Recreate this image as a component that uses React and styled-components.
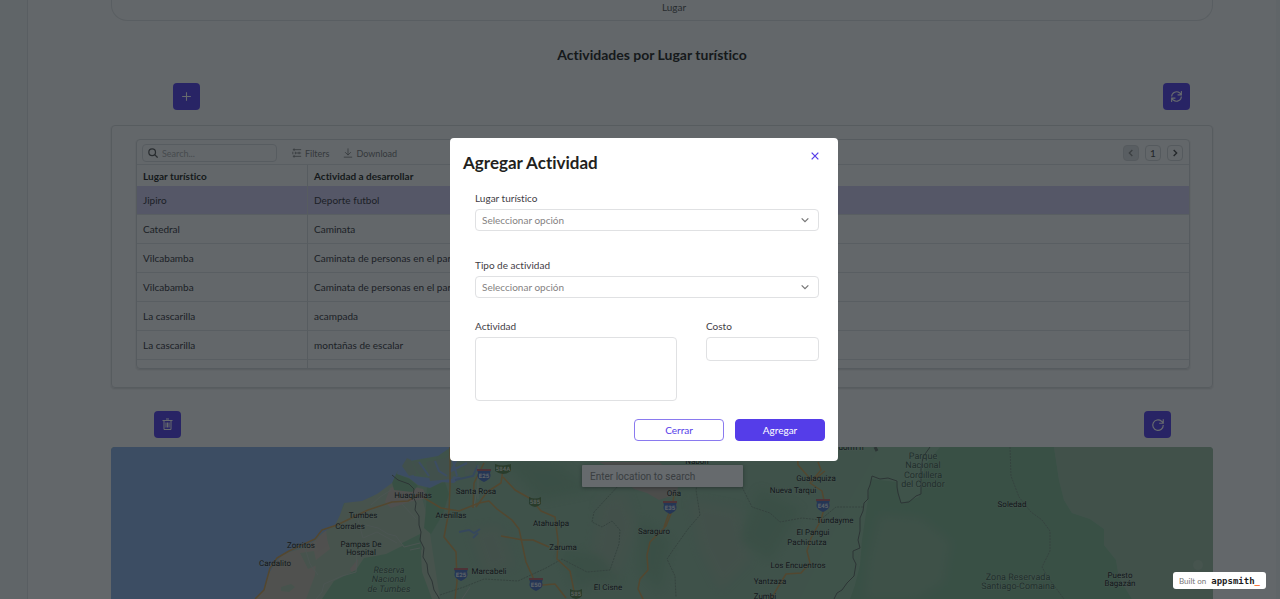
import React from "react";
import styled, { createGlobalStyle } from "styled-components";

const purple = "#553de9";

const GlobalStyle = createGlobalStyle`
  *, *::before, *::after { box-sizing: border-box; }
  body {
    margin: 0;
    background: #edf0f2;
    font-family: Lato, "Open Sans", sans-serif;
    font-size: 10px;
    font-variant-ligatures: none;
    color: #231f20;
  }
  button, input, select, textarea { font: inherit; color: inherit; }
`;

const Page = styled.div`
  height: 100vh;
  overflow: hidden;
  display: flex;
  padding: 0 4px 0 27px;
`;

const Canvas = styled.main`
  flex: 1;
  min-width: 0;
  display: flex;
  flex-direction: column;
  background: #f6f6f6;
  border-left: 1px solid #dadde0;
`;

const Column = styled.section`
  margin: 0 63px 0 83px;
  display: flex;
  flex-direction: column;
  flex: ${(p) => (p.$grow ? "1" : "none")};
  min-height: 0;
`;

const ChartCard = styled.div`
  height: 21px;
  padding-left: 24px;
  border: 1px solid #dcdedf;
  border-top: 0;
  border-radius: 0 0 16px 16px;
  text-align: center;
  line-height: 14px;
  color: #555;
`;

const SectionTitle = styled.h2`
  margin: 24px 0 0;
  font-size: 14px;
  line-height: 20px;
  font-weight: 700;
  text-align: center;
`;

const ActionBar = styled.div`
  display: flex;
  justify-content: space-between;
  padding: ${(p) => p.$padding};
`;

const IconButton = styled.button`
  width: 27px;
  height: 27px;
  padding: 0;
  border: 0;
  border-radius: 4px;
  background: ${purple};
  color: #fff;
  display: grid;
  place-items: center;
`;

const TableCard = styled.div`
  border: 1px solid #d5d7d9;
  border-radius: 4px;
  padding: 13px 22px 18px 24px;
  box-shadow: 0 1px 2px rgba(0, 0, 0, 0.14);
`;

const TableFrame = styled.div`
  border: 1px solid #d3d5d7;
  border-radius: 4px;
  height: 230px;
  overflow: hidden;
  box-shadow: 0 1px 2px rgba(0, 0, 0, 0.14);
`;

const Toolbar = styled.div`
  height: 25px;
  display: flex;
  align-items: center;
  padding: 2px 6px 0 5px;
  border-bottom: 1px solid #dcdedf;
`;

const SearchBox = styled.label`
  width: 135px;
  height: 18px;
  display: flex;
  align-items: center;
  gap: 4px;
  padding: 0 5px;
  margin-right: 15px;
  border: 1px solid #d6d8da;
  border-radius: 4px;
  color: #555;
`;

const SearchInput = styled.input`
  flex: 1;
  min-width: 0;
  border: 0;
  padding: 0;
  outline: 0;
  background: none;
  font-size: 9px;
  &::placeholder { color: #a9a9a9; opacity: 1; }
`;

const ToolButton = styled.button`
  display: flex;
  align-items: center;
  gap: 3px;
  padding: 0;
  margin-right: 14px;
  border: 0;
  background: none;
  color: #777;
  font-size: 9px;
`;

const Pager = styled.nav`
  display: flex;
  gap: 6px;
  margin-left: auto;
`;

const PageButton = styled.button`
  width: 16px;
  height: 16px;
  padding: 0;
  display: grid;
  place-items: center;
  border: 1px solid #d0d2d4;
  border-radius: 4px;
  background: ${(p) => (p.$muted ? "#dcdedf" : "transparent")};
  color: ${(p) => (p.$muted ? "#888" : "#444")};
`;

const Table = styled.table`
  width: 100%;
  border-collapse: separate;
  border-spacing: 0;
  table-layout: fixed;
`;

const HeadCell = styled.th`
  width: ${(p) => p.$width || "auto"};
  height: 21px;
  padding: 0 6px;
  text-align: left;
  font-weight: 700;
  border-right: ${(p) => (p.$width ? "1px solid #d6d8da" : "0")};
`;

const Row = styled.tr`
  background: ${(p) => (p.$selected ? "#cfc9ef" : "transparent")};
`;

const Cell = styled.td`
  height: 29px;
  padding: 0 6px;
  color: #35343a;
  border-bottom: 1px solid #dcdedf;
  &:first-child { border-right: 1px solid #d6d8da; }
`;

const MapFrame = styled.div`
  position: relative;
  flex: 1;
  min-height: 0;
  overflow: hidden;
  border-radius: 4px 4px 0 0;
`;

const MapDrawing = styled.svg`
  display: block;
  width: 100%;
  height: 100%;
  font-family: Roboto, sans-serif;
  text-rendering: geometricPrecision;
`;

const MapSearch = styled.input`
  position: absolute;
  top: 18px;
  left: 50%;
  width: 161px;
  height: 22px;
  margin-left: -80px;
  padding: 0 8px;
  border: 0;
  border-radius: 1px;
  background: #fff;
  font-family: Roboto, sans-serif;
  box-shadow: 0 1px 4px rgba(0, 0, 0, 0.4);
  &::placeholder { color: #858585; opacity: 1; }
`;

const Overlay = styled.div`
  position: fixed;
  inset: 0;
  display: grid;
  place-items: center;
  padding-left: 8px;
  background: rgba(16, 22, 26, 0.64);
`;

const Modal = styled.form`
  width: 388px;
  padding-bottom: 20px;
  border-radius: 4px;
  background: #fff;
`;

const ModalHeader = styled.header`
  display: flex;
  justify-content: space-between;
  align-items: flex-start;
  padding: 12px 17px 0 13px;
`;

const ModalTitle = styled.h1`
  margin: 0;
  font-size: 17px;
  line-height: 25px;
  font-weight: 700;
`;

const CloseButton = styled.button`
  width: 12px;
  height: 12px;
  padding: 0;
  border: 0;
  background: none;
  color: ${purple};
  display: grid;
  place-items: center;
`;

const Fields = styled.div`
  display: grid;
  grid-template-columns: 202px 113px;
  justify-content: space-between;
  padding: 17px 19px 0 25px;
`;

const Field = styled.div`
  grid-column: ${(p) => (p.$wide ? "1 / -1" : "auto")};
  padding-bottom: ${(p) => p.$after || "0"};
  display: flex;
  flex-direction: column;
  gap: 5px;
`;

const FieldLabel = styled.label`
  line-height: 12px;
  color: #3f3d45;
`;

const SelectWrap = styled.div`
  display: grid;
  align-items: center;
  svg {
    grid-area: 1 / 1;
    justify-self: end;
    margin-right: 9px;
    color: #777;
    pointer-events: none;
  }
`;

const controlBorder = "1px solid #e0e1e3";

const Select = styled.select`
  grid-area: 1 / 1;
  width: 100%;
  height: 22px;
  padding: 0 6px;
  border: ${controlBorder};
  border-radius: 4px;
  background: #fff;
  color: #858282;
  appearance: none;
`;

const TextArea = styled.textarea`
  display: block;
  height: 64px;
  border: ${controlBorder};
  border-radius: 4px;
  resize: none;
`;

const TextInput = styled.input`
  width: 100%;
  height: 24px;
  border: ${controlBorder};
  border-radius: 4px;
`;

const ModalFooter = styled.footer`
  display: flex;
  justify-content: flex-end;
  gap: 11px;
  padding: 18px 13px 0;
`;

const FormButton = styled.button`
  width: 90px;
  height: 22px;
  padding: 0;
  border: 1px solid ${(p) => (p.$primary ? purple : "#8a7aef")};
  border-radius: 4px;
  background: ${(p) => (p.$primary ? purple : "#fff")};
  color: ${(p) => (p.$primary ? "#fff" : purple)};
`;

const Badge = styled.a`
  position: fixed;
  right: 14px;
  bottom: 10px;
  height: 17px;
  display: flex;
  align-items: center;
  gap: 5px;
  padding: 0 6px;
  border-radius: 3px;
  background: #fff;
  color: #777;
  font-size: 8px;
  text-decoration: none;
`;

const Brand = styled.strong`
  font: 700 9px "DejaVu Sans Mono", monospace;
  color: #1d1c1d;
  span { color: #f86a2b; }
`;

function Icon({ size = 12, width = 2, children }) {
  return (
    <svg width={size} height={size} viewBox="0 0 24 24" fill="none" stroke="currentColor" strokeWidth={width} aria-hidden="true">
      {children}
    </svg>
  );
}

const Chevron = () => (
  <Icon size={10} width={3}><path d="M4 8l8 8 8-8" /></Icon>
);

const rows = [
  ["Jipiro", "Deporte futbol"],
  ["Catedral", "Caminata"],
  ["Vilcabamba", "Caminata de personas en el parque"],
  ["Vilcabamba", "Caminata de personas en el parque"],
  ["La cascarilla", "acampada"],
  ["La cascarilla", "montañas de escalar"],
  ["", ""],
];

const towns = [
  [413, 498, "Huaquillas"], [363, 518, "Tumbes"], [350, 529, "Corrales"],
  [301, 548, "Zorritos"], [275, 566, "Cardalito"], [361, 547, "Pampas De"],
  [361, 555, "Hospital"], [451, 518, "Arenillas"], [476, 494, "Santa Rosa"],
  [551, 526, "Atahualpa"], [563, 550, "Zaruma"], [489, 574, "Marcabeli"],
  [608, 590, "El Cisne"], [674, 496, "Oña"], [654, 534, "Saraguro"],
  [697, 464, "Nabon"], [816, 481, "Gualaquiza"], [793, 493, "Nueva Tarqui"],
  [835, 523, "Tundayme"], [813, 535, "El Pangui"], [807, 545, "Pachicutza"],
  [798, 568, "Los Encuentros"], [770, 584, "Yantzaza"], [765, 599, "Zumbi"],
  [1012, 507, "Soledad"], [1120, 578, "Puesto"], [1120, 586, "Bagazán"],
  [851, 450, "dorm n"],
];

const parks = [
  [389, 573, "Reserva", true], [389, 582, "Nacional", true], [389, 592, "de Tumbes", true],
  [923, 459, "Parque"], [923, 468, "Nacional"], [923, 478, "Cordillera"], [923, 487, "del Condor"],
  [1018, 580, "Zona Reservada"], [1018, 589, "Santiago-Comaina"],
];

const shields = [
  [484, 475, "E25"], [461, 574, "E25"], [536, 584, "E50"], [670, 507, "E35"], [823, 505, "E45"],
];
const plates = [[503, 469, "584A", 16], [535, 502, "585", 12], [576, 594, "585", 12]];

function TerritoryMap() {
  return (
    <MapDrawing viewBox="111 447 1102 152" preserveAspectRatio="xMidYMin slice" role="img" aria-label="Mapa">
      <defs>
        <filter id="soft" x="-20%" y="-20%" width="140%" height="140%"><feGaussianBlur stdDeviation="5" /></filter>
      </defs>
      <rect x="111" y="447" width="1102" height="152" fill="#93c09f" />
      <path d="M440 447H880L850 500 800 599H430L434 560 420 500Z" fill="#92bc9d" />
      <path d="M390 480L420 490 428 520 434 560 440 599H255L268 575 283 554 320 534 340 514 345 503 372 497Z" fill="#a9bfa6" />
      <g fill="#9fb8a0" filter="url(#soft)" opacity=".8">
        <path d="M600 500l25-8 12 35-20 50-35 8 12-40zM690 500l50 10 10 50-30 30-20-40zM470 530l30-5 15 40-30 10z" />
        <path d="M870 520l50-10 30 30-10 50-60 9-20-40z" />
      </g>
      <g fill="#84b391" filter="url(#soft)" opacity=".8">
        <path d="M500 455l60 10 30 25-50 10zM640 520l30 20-10 50-20-20zM760 490l40 20-30 50-30-20zM560 550l40 5 20 25-45 6z" />
      </g>
      <path d="M255 599L264 590 268 575 275 563 283 554 304 548 316 540 325 534 330 549 316 560 315 575 306 599Z" fill="#c3bbab" />
      <path d="M281 587l10-3 4 3-6 5-8-1zM300 553l14-2 3 14-9 4z" fill="#a9bfa6" />
      <path d="M385 502l5-14 12-4 21 5 4 9-18 4-18 6z" fill="#c3b7ab" />
      <path d="M316 540l10-10 2 16-10 6zM350 569l8-10-2 20z" fill="#c3b7ab" />
      <path d="M599 462h60l20 18-2 14-18 6-12-7-13-4-25-22z" fill="#c2aaa4" opacity=".75" />
      <path d="M322 599l12-18 22-11 8-12 22-4 18-9 16-8 2 35 10 27z" fill="#85bb93" />
      <path d="M390 475l5-2 15 6 8 7-6 6-18-2zM427 486l18-4 4 12-6 20-12 20-7-6 2-20z" fill="#80b88f" />
      <path d="M400 544l20-10 2 16-8-3z" fill="#85bb93" />
      <path d="M111 447H451L438 456 421 459 405 462 397 472 392 483 377 494 362 501 344 503 340 515 335 525 322 533 314 541 300 548 283 554 275 563 268 575 264 590 255 599H111Z" fill="#8caee2" />
      <path d="M397 474l3-12 7-3 7 17 16 2 10-5 11 3 10 1-7 6-12-1-12 6-12-3-9-7z" fill="#8caee2" />
      <path d="M402 466l5-8 4 2 6 14-8 2zM412 461l9 1 5 15-7-3zM426 462l20-4 10-10 8 3-4 10-8 18-22 2zM464 452l14-2-4 22-9 4z" fill="#99b6a4" />
      <path d="M419 462l10 14M435 461l4 10 8 5M452 458l5 18M461 451l-10 20 16-8" fill="none" stroke="#8caee2" strokeWidth="2" />
      <path d="M459 532l10-2 5 3 6-4M478 533l-5 5M455 480l18-4 5-11" fill="none" stroke="#7ba0cf" strokeWidth="2" />
      <path d="M955 447H1054L1059 480 1064 500 1072 513 1090 519 1104 529 1104 545 1116 560 1119 578 1132 599H850L855 585 860 565 862 540 871 479 897 482 901 503 919 497 925 465 940 447Z" fill="#83b791" />
      <path d="M880 515l40 3 30 24-7 40-28 17h-50l4-40z" fill="#91b99a" filter="url(#soft)" />
      <path d="M1054 447H1213V599H1132L1119 578 1116 560 1104 545 1104 529 1090 519 1072 513 1064 500 1059 480Z" fill="#98b99f" />
      <circle cx="1198" cy="565" r="5" fill="#a7c1aa" />
      <g fill="none" stroke="#b5c4b5" strokeWidth="1">
        <path d="M371 505l9-8 11-7M358 520l5 18 14-6 20 11M366 525l12 3 10 6 8 2 8 11 16-4M357 552l-1 20-14 4-18 8-2 8-6 7M305 548l5 16 8 11M402 504l14 15M462 599l8-12" />
        <path d="M410 550l10-2M478 465v34M474 507l3-18" />
      </g>
      <g fill="none" stroke="#77927e" strokeWidth="1" strokeDasharray="2 1">
        <path d="M440 595l24-8 20-8 34 2 28-13 16-9 25 13 23-2 9-26 1-14-8-9-10 6-10-5 2-10 25-27M700 470l-4 20 4 25-12 14-15 21-6 9 8 17 1 21" />
        <path d="M742 487l10 20 18 6 10 9 22-4 18 2 16-13h28" />
        <path d="M1010 447l1 29 8 21 12 15 11 8 8 11v20l-8 16 5 9 17 23" />
      </g>
      <g fill="none" stroke="#c99d55" strokeWidth="1.5" strokeLinejoin="round">
        <path d="M255 599l9-9 6-22 7-10 12-7 26-12 7-9 15-5 31-15 24-8 16-1 11-7 7 5 15 9 18 3 20-8 10-2 8 8 15 11 7 9 7 33 9 20 8 3 12-1 11 14" />
        <path d="M473 508l1-25 10-20M450 447v40l-1 24-5 26 12 15 1 30-2 17M503 469l-2 14-14 9-11 15M503 477l12 13 16 9 10 12 14 6 3 24-1 18 13 12 4 20M501 536l22 4 10 0 16 7M674 494l-2 17-6 15-16 16-3 13 1 15-8 9-2 10 8 16M669 513l-5 14" />
        <path d="M797 447l1 18 15 17M818 462l3 8-11 13 12 8 3 14-4 15-10 18-4 13 3 12-9 10-15 1-8 13-8 14M815 479l10-8" />
      </g>
      <g fill="none" stroke="#616c65" strokeWidth="1" strokeLinejoin="round">
        <path d="M392 475l6 5 11 4 5 5-1 7 3 7-1 7 4 6v9l2 7-1 8 4 8-1 9 4 7 1 9 4 8 2 9 5 8 1 10" />
        <path d="M930 447l-7 10-2 12v25l-5 2-7 6-8 1-3-10-1-6v-6l-9-3-8 1-8-3-2 9-2 5v9l-4 4-1 8-3 7v13l-2 9 2 8-7 3v7l3 6-2 12-7 7-5 7-5 3-3 6v7" />
        <path d="M875 447l2 4" strokeWidth="3" />
      </g>
      {shields.map(([x, y, label]) => (
        <g key={`${x}-${y}`}>
          <path d={`M${x - 7} ${y - 5}h14l-1 3c2 5-2 7-6 9-4-2-8-4-6-9z`} fill="#4c70bc" />
          <path d={`M${x - 7} ${y - 6}h14v2h-14z`} fill="#b9656b" />
          <text x={x} y={y + 3} fill="#e6e9f0" fontSize="6" fontWeight="700" textAnchor="middle">{label}</text>
        </g>
      ))}
      {plates.map(([x, y, label, w]) => (
        <g key={`${x}-${y}`}>
          <path d={`M${x - w / 2} ${y - 5}q${w / 2} 3 ${w} 0v7q${-w / 2} 6 ${-w} 0z`} fill="#587f49" />
          <text x={x} y={y + 2} fill="#d5dfce" fontSize="6" fontWeight="700" textAnchor="middle">{label}</text>
        </g>
      ))}
      <g fontSize="8" fill="#151817" stroke="#c3d0c5" strokeWidth="1" strokeOpacity=".4" paintOrder="stroke" textAnchor="middle">
        {towns.map(([x, y, name]) => <text key={`${name}-${x}`} x={x} y={y}>{name}</text>)}
      </g>
      <g fontSize="9" fill="#3c5c49" stroke="#c3d6c7" strokeWidth="1" strokeOpacity=".4" paintOrder="stroke" textAnchor="middle">
        {parks.map(([x, y, name, slanted]) => (
          <text key={`${name}-${x}`} x={x} y={y} fontStyle={slanted ? "italic" : "normal"}>{name}</text>
        ))}
      </g>
    </MapDrawing>
  );
}

export default function App() {
  return (
    <>
      <GlobalStyle />
      <Page>
        <Canvas>
          <Column><ChartCard>Lugar</ChartCard></Column>
          <SectionTitle>Actividades por Lugar turístico</SectionTitle>
          <Column>
            <ActionBar $padding="18px 23px 15px 62px">
              <IconButton aria-label="Agregar">
                <Icon size={13} width={2}><path d="M12 4v16M4 12h16" /></Icon>
              </IconButton>
              <IconButton aria-label="Sincronizar">
                <Icon size={13} width={2}>
                  <path d="M3 12a9 9 0 0 1 15-6.500l3 3M21 2v7h-7M21 12a9 9 0 0 1-15 6.500l-3-3M3 22v-7h7" />
                </Icon>
              </IconButton>
            </ActionBar>
            <TableCard>
              <TableFrame>
                <Toolbar>
                  <SearchBox>
                    <Icon size={10} width={3}><circle cx="10" cy="10" r="8" /><path d="M16 16l7 7" /></Icon>
                    <SearchInput aria-label="Search" placeholder="Search..." />
                  </SearchBox>
                  <ToolButton>
                    <Icon size={10} width={2}>
                      <path d="M2 4h20M8 12h14M2 20h20M2 9v6M5 1v6M8 9v6M17 9v6M5 17v6" />
                    </Icon>
                    Filters
                  </ToolButton>
                  <ToolButton>
                    <Icon size={10} width={2}><path d="M12 1v16M5 10l7 7 7-7M2 22h20" /></Icon>
                    Download
                  </ToolButton>
                  <Pager aria-label="Páginas">
                    <PageButton $muted aria-label="Anterior">
                      <Icon size={8} width={4}><path d="M16 3l-9 9 9 9" /></Icon>
                    </PageButton>
                    <PageButton>1</PageButton>
                    <PageButton aria-label="Siguiente">
                      <Icon size={8} width={4}><path d="M8 3l9 9-9 9" /></Icon>
                    </PageButton>
                  </Pager>
                </Toolbar>
                <Table>
                  <thead>
                    <tr>
                      <HeadCell $width="171px">Lugar turístico</HeadCell>
                      <HeadCell>Actividad a desarrollar</HeadCell>
                    </tr>
                  </thead>
                  <tbody>
                    {rows.map(([place, activity], i) => (
                      <Row key={i} $selected={i === 0}>
                        <Cell>{place}</Cell>
                        <Cell>{activity}</Cell>
                      </Row>
                    ))}
                  </tbody>
                </Table>
              </TableFrame>
            </TableCard>
            <ActionBar $padding="23px 42px 9px 43px">
              <IconButton aria-label="Eliminar">
                <svg width="11" height="13" viewBox="0 0 22 26" fill="none" stroke="currentColor" aria-hidden="true">
                  <path d="M1 5h20M8 2h6M4 6v17h14V6M8 9v10M11 9v10M14 9v10" strokeWidth="2" />
                </svg>
              </IconButton>
              <IconButton aria-label="Recargar">
                <Icon size={14} width={2}><path d="M21 12a9 9 0 1 1-3-6.500l3 3M21 2v7h-7" /></Icon>
              </IconButton>
            </ActionBar>
          </Column>
          <Column $grow>
            <MapFrame>
              <TerritoryMap />
              <MapSearch aria-label="Ubicación" placeholder="Enter location to search" />
            </MapFrame>
          </Column>
        </Canvas>
      </Page>
      <Overlay>
        <Modal role="dialog" aria-labelledby="modal-title" onSubmit={(e) => e.preventDefault()}>
          <ModalHeader>
            <ModalTitle id="modal-title">Agregar Actividad</ModalTitle>
            <CloseButton type="button" aria-label="Cerrar ventana">
              <Icon size={10} width={3}><path d="M4 4l16 16M20 4L4 20" /></Icon>
            </CloseButton>
          </ModalHeader>
          <Fields>
            <Field $wide $after="28px">
              <FieldLabel htmlFor="place">Lugar turístico</FieldLabel>
              <SelectWrap>
                <Select id="place"><option>Seleccionar opción</option></Select>
                <Chevron />
              </SelectWrap>
            </Field>
            <Field $wide $after="22px">
              <FieldLabel htmlFor="kind">Tipo de actividad</FieldLabel>
              <SelectWrap>
                <Select id="kind"><option>Seleccionar opción</option></Select>
                <Chevron />
              </SelectWrap>
            </Field>
            <Field>
              <FieldLabel htmlFor="activity">Actividad</FieldLabel>
              <TextArea id="activity" />
            </Field>
            <Field>
              <FieldLabel htmlFor="cost">Costo</FieldLabel>
              <TextInput id="cost" />
            </Field>
          </Fields>
          <ModalFooter>
            <FormButton type="button">Cerrar</FormButton>
            <FormButton type="submit" $primary>Agregar</FormButton>
          </ModalFooter>
        </Modal>
      </Overlay>
      <Badge href="#appsmith">
        Built on <Brand>appsmith<span>_</span></Brand>
      </Badge>
    </>
  );
}
